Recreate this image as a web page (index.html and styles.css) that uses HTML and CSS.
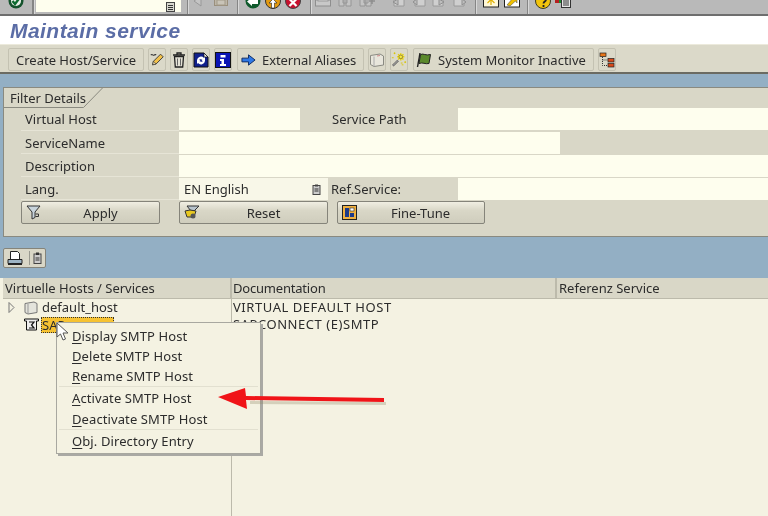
FILE: index.html
```html
<!DOCTYPE html>
<html lang="en">
<head>
<meta charset="utf-8">
<title>Maintain service</title>
<link rel="stylesheet" href="styles.css">
</head>
<body>
<div class="page">
  <header class="systembar">
    <span class="slot s-check"><svg width="16" height="16" viewBox="0 0 16 16"><circle cx="8" cy="8" r="7.5" fill="#14532d"/><circle cx="8" cy="8" r="5" fill="#e8efe8"/><path d="M4.500 8l2.500 3 4.500-6" fill="none" stroke="#0c6b2f" stroke-width="2.400"/></svg></span>
    <span class="sys-sep sep-a"></span>
    <span class="command"><svg class="doc" width="9" height="10" viewBox="0 0 9 10"><rect x=".5" y=".5" width="8" height="9" fill="#d8d8d0" stroke="#444"/><path d="M2 3.500h5M2 5.500h5M2 7.500h5" stroke="#333"/></svg></span>
    <span class="sys-sep sep-b"></span>
    <span class="slot s-nav"><svg width="12" height="16" viewBox="0 0 12 16"><path d="M10 3v10L3 8z" fill="#c4c4c4" stroke="#999"/></svg></span>
    <span class="slot s-save"><svg width="16" height="16" viewBox="0 0 16 16"><rect x="1.500" y="1.500" width="13" height="13" fill="#bdb6a8" stroke="#9a8f7c"/><rect x="4" y="9" width="8" height="5" fill="#c9c4b8" stroke="#a29a88"/></svg></span>
    <span class="sys-sep sep-c"></span>
    <span class="slot s-green"><svg width="18" height="16" viewBox="0 0 18 16"><circle cx="9" cy="8" r="7.500" fill="#0f5a2c"/><path d="M3 8.500l5-4v2.500h6v4H8v2z" fill="#fff"/></svg></span>
    <span class="slot s-round"><svg width="18" height="16" viewBox="0 0 18 16"><circle cx="9" cy="8" r="7.500" fill="#e39a10" stroke="#333"/><path d="M9 6l4 4h-2.500v5h-3v-5H5z" fill="#fff" stroke="#222" stroke-width=".6"/></svg></span>
    <span class="slot s-round"><svg width="18" height="16" viewBox="0 0 18 16"><circle cx="9" cy="8" r="7.500" fill="#c8102e" stroke="#444"/><path d="M5.500 6l7 7M12.500 6l-7 7" stroke="#fff" stroke-width="2.200"/></svg></span>
    <span class="sys-sep sep-d"></span>
    <span class="slot s-grey"><svg width="18" height="16" viewBox="0 0 18 16"><rect x="1.500" y="9" width="15" height="6" fill="#c8c8c8" stroke="#8e8e8e"/><rect x="4" y="2" width="10" height="8" fill="#d6d6d6" stroke="#9a9a9a"/></svg></span>
    <span class="slot s-grey"><svg width="18" height="16" viewBox="0 0 18 16"><path d="M3 3h5v12H3zM10 3h5v12h-5zM7 6h4v6H7z" fill="#c4c4c4" stroke="#969696"/></svg></span>
    <span class="slot s-grey"><svg width="18" height="16" viewBox="0 0 18 16"><path d="M2 3h5v12H2zM8 3h5v12H8zM6 6h4v6H6z" fill="#c4c4c4" stroke="#969696"/><path d="M14 7v6M11 10h6" stroke="#8e8e8e" stroke-width="1.500"/></svg></span>
    <span class="slot s-page s-first"><svg width="18" height="16" viewBox="0 0 18 16"><path d="M5 2h10v13H5z" fill="#cfcfcf" stroke="#9a9a9a"/><path d="M9 8l-5 3 5 3z" fill="#bdbdbd" stroke="#8f8f8f"/></svg></span>
    <span class="slot s-page"><svg width="18" height="16" viewBox="0 0 18 16"><path d="M5 2h10v13H5z" fill="#cfcfcf" stroke="#9a9a9a"/><path d="M7 8l-4 3 4 3z" fill="#bdbdbd" stroke="#8f8f8f"/></svg></span>
    <span class="slot s-page"><svg width="18" height="16" viewBox="0 0 18 16"><path d="M3 2h10v13H3z" fill="#cfcfcf" stroke="#9a9a9a"/><path d="M9 8l5 3-5 3z" fill="#bdbdbd" stroke="#8f8f8f"/></svg></span>
    <span class="slot s-page"><svg width="18" height="16" viewBox="0 0 18 16"><path d="M3 2h10v13H3z" fill="#cfcfcf" stroke="#9a9a9a"/><path d="M11 8l4 3-4 3z" fill="#bdbdbd" stroke="#8f8f8f"/></svg></span>
    <span class="sys-sep sep-f"></span>
    <span class="slot s-win"><svg width="16" height="16" viewBox="0 0 16 16"><rect x=".5" y="-1" width="15" height="16" fill="#fff8d8" stroke="#222"/><path d="M8 2v11M3 7.500h10M4.500 4l7 7M11.500 4l-7 7" stroke="#e0b000" stroke-width="1.200"/></svg></span>
    <span class="slot s-win2"><svg width="16" height="16" viewBox="0 0 16 16"><rect x=".5" y="-1" width="15" height="16" fill="#fff" stroke="#222"/><path d="M3 13l6-7-2-1h6v6l-1.500-2L6 14z" fill="#f0c000" stroke="#444" stroke-width=".5"/></svg></span>
    <span class="sys-sep sep-g"></span>
    <span class="slot s-help"><svg width="18" height="16" viewBox="0 0 18 16"><circle cx="9" cy="8" r="7.500" fill="#f2c40c" stroke="#3a3a22"/><path d="M6.500 6.500c0-3.500 5.500-3.500 5.500 0 0 2-2.500 2-2.500 4M9.500 12v2" fill="none" stroke="#222" stroke-width="1.800"/></svg></span>
    <span class="slot s-layout"><svg width="16" height="16" viewBox="0 0 16 16"><rect x="0" y="2" width="4" height="9" fill="#b52020"/><rect x="4" y="2" width="4" height="9" fill="#1c8a30"/><rect x="8" y="2" width="4" height="4" fill="#2244aa"/><rect x="6.500" y="6.500" width="9" height="9" fill="#e8e8e8" stroke="#333"/><path d="M8 9h6M8 11h6M8 13h6" stroke="#333"/></svg></span>
  </header>

  <div class="titlebar"><h1>Maintain service</h1></div>

  <div class="apptoolbar">
    <button class="tbtn tbtn-text">Create Host/Service</button>
    <button class="tbtn tbtn-icon"><svg width="17" height="17" viewBox="0 0 18 18"><path d="M2 4c2-2 2 1 4 0s1-1 2 0" fill="none" stroke="#333" stroke-width="1.200"/><path d="M4 15l1-4L13 3l3 3-8 8z" fill="#f2c14a" stroke="#333"/><path d="M4 15l1-4 3 3z" fill="#e8d8b0" stroke="#333" stroke-width=".7"/></svg></button>
    <button class="tbtn tbtn-icon"><svg width="14" height="16" viewBox="0 0 14 16"><path d="M1 3h12M5 3V1h4v2" fill="none" stroke="#222" stroke-width="1.300"/><path d="M2.500 4.500h9l-.8 10.500H3.300z" fill="#e4e2d6" stroke="#222" stroke-width="1.300"/><path d="M5.500 6.500v7M8.500 6.500v7" stroke="#666"/></svg></button>
    <button class="tbtn tbtn-icon"><svg width="16" height="16" viewBox="0 0 16 16"><path d="M1 1h10l4 4v10H1z" fill="#10208c" stroke="#111"/><path d="M11 1v4h4z" fill="#eee" stroke="#111" stroke-width=".7"/><path d="M4 8a4 4 0 0 1 7-2l1-1v4H8.500l1-1a2.500 2.500 0 0 0-4 .5zM12 9a4 4 0 0 1-7 2l-1 1V8h3.500l-1 1a2.500 2.500 0 0 0 4-.5z" fill="#fff"/></svg></button>
    <button class="tbtn tbtn-icon"><svg width="16" height="16" viewBox="0 0 16 16"><rect x=".5" y=".5" width="15" height="15" fill="#0a14b4" stroke="#111"/><path d="M5.500 3h5v2.500h-5zM5 7h4v5h2v2H5v-2h1.500V9H5z" fill="#fff"/></svg></button>
    <button class="tbtn tbtn-aliases"><svg width="15" height="14" viewBox="0 0 16 14"><path d="M1 5h7V1.500L15 7l-7 5.500V9H1z" fill="#2e78e6" stroke="#0f2a60"/></svg><span>External Aliases</span></button>
    <button class="tbtn tbtn-icon"><svg width="16" height="16" viewBox="0 0 16 16"><path d="M1.500 3.500L11 2l3.500 2v9L5 14.500l-3.500-2z" fill="#e8e6dc" stroke="#8a8a82"/><path d="M5 4.500v10" stroke="#aaa"/><path d="M8 4l3-.5" stroke="#c88"/></svg></button>
    <button class="tbtn tbtn-icon"><svg width="17" height="17" viewBox="0 0 18 18"><path d="M2 16L8 10" stroke="#555" stroke-width="2.400"/><path d="M2 16L8 10" stroke="#eee" stroke-width=".8"/><path d="M11 2v8M7 6h8M8 3l6 6M14 3l-6 6" stroke="#e8d000" stroke-width="1.600"/><circle cx="11" cy="6" r="2" fill="#f8e840" stroke="#555" stroke-width=".6"/><path d="M3 2h2M4 1v2M15 12h2M16 11v2M11 13h2M12 15h2M1 7h2" stroke="#d8c400"/></svg></button>
    <button class="tbtn tbtn-monitor"><svg width="16" height="16" viewBox="0 0 16 16"><path d="M4 1L1.500 15" stroke="#222" stroke-width="1.400"/><path d="M4.500 2.500c3-1.500 5 1.500 10 0l-1.500 9c-4 1-6-1.500-10 0z" fill="#5b8a2c" stroke="#222"/></svg><span>System Monitor Inactive</span></button>
    <button class="tbtn tbtn-icon"><svg width="16" height="16" viewBox="0 0 16 16"><rect x="1" y="1" width="6" height="3.500" fill="#e8761a" stroke="#222" stroke-width=".7"/><rect x="9" y="6.500" width="6" height="3.500" fill="#d84a1a" stroke="#222" stroke-width=".7"/><rect x="9" y="11.500" width="6" height="3.500" fill="#d84a1a" stroke="#222" stroke-width=".7"/><path d="M3.500 5v8.500H9M3.500 8H9" fill="none" stroke="#333" stroke-dasharray="1 1"/></svg></button>
  </div>

  <main class="workarea">
    <section class="filter">
      <div class="tab"><span>Filter Details</span><svg class="tabline" width="103" height="20" viewBox="0 0 103 20"><path d="M0 19.500h79.500L98.500 0" fill="none" stroke="#8a8a80"/></svg></div>
      <div class="fgrid">
        <label class="lbl">Virtual Host</label>
        <div class="inp f-host"></div>
        <label class="lbl2 l-path">Service Path</label>
        <div class="inp f-path f-first"></div>

        <label class="lbl">ServiceName</label>
        <div class="inp f-name"></div>
        <div class="blank"></div>

        <label class="lbl">Description</label>
        <div class="inp f-wide"></div>

        <label class="lbl">Lang.</label>
        <div class="inp f-lang"><span>EN English</span><svg width="9" height="11" viewBox="0 0 9 11"><rect x="1" y="1.500" width="7" height="9" fill="#ccc" stroke="#444"/><rect x="3" y=".5" width="3" height="2" fill="#444"/><path d="M2.500 5h4M2.500 7h4" stroke="#333"/></svg></div>
        <label class="lbl2">Ref.Service:</label>
        <div class="inp f-path"></div>
      </div>
      <div class="actions">
        <button class="pbtn b-apply"><svg width="16" height="15" viewBox="0 0 16 15"><path d="M1 1h13L9 7v5.500L6 14V7z" fill="#c8d4dc" stroke="#333"/><path d="M9.500 9h3v2.500h-3" fill="none" stroke="#333"/></svg><span>Apply</span></button>
        <button class="pbtn b-reset"><svg width="16" height="15" viewBox="0 0 16 15"><path d="M3 1h12L10 6H7z" fill="#b8c4cc" stroke="#333"/><path d="M1 6l5-1 6 1-2 6H3z" fill="#e8c820" stroke="#333"/><circle cx="9" cy="11" r="2.500" fill="#555"/></svg><span>Reset</span></button>
        <button class="pbtn b-tune"><svg width="15" height="15" viewBox="0 0 15 15"><rect x=".5" y=".5" width="14" height="14" fill="#f0b040" stroke="#222"/><rect x="3" y="3" width="4" height="9" fill="#1c3a8a"/><rect x="8" y="3" width="4" height="3" fill="#fff" stroke="#222" stroke-width=".6"/><rect x="8" y="8" width="4" height="4" fill="#1c3a8a"/></svg><span>Fine-Tune</span></button>
      </div>
    </section>

    <div class="printbar">
      <div class="printgroup">
        <svg width="16" height="16" viewBox="0 0 16 16"><path d="M3.500 1.500h7l2 2v6h-9z" fill="#fff" stroke="#222"/><path d="M1 9.500h14v4H1z" fill="#9db4c4" stroke="#222"/><path d="M1 14.500h14" stroke="#222"/></svg>
        <i class="pg-sep"></i>
        <svg width="9" height="12" viewBox="0 0 9 12"><rect x="1" y="2" width="7" height="9.500" fill="#ccc" stroke="#444"/><rect x="3" y=".5" width="3" height="2.500" fill="#333"/><path d="M2.500 6h4M2.500 8h4" stroke="#333"/></svg>
      </div>
    </div>

    <section class="tree">
      <div class="thead">
        <div class="col c1">Virtuelle Hosts / Services</div>
        <div class="col c2">Documentation</div>
        <div class="col c3">Referenz Service</div>
      </div>
      <div class="tbody">
        <div class="tcol tc1">
          <div class="node">
            <svg class="twist" width="7" height="11" viewBox="0 0 7 11"><path d="M1 .5l5 5-5 5z" fill="#f4f2e2" stroke="#777"/></svg>
            <svg class="nodeicon" width="14" height="14" viewBox="0 0 14 14"><path d="M1 2.500L10 1l3 1.500v9L4 13l-3-1.500z" fill="#e4e4dc" stroke="#777"/><path d="M4 3v10" stroke="#999"/></svg>
            <span>default_host</span>
          </div>
          <div class="node node-sel">
            <svg class="nodeicon2" width="15" height="14" viewBox="0 0 15 14"><path d="M.5 1h14v2h-2v9h-10V3h-2z" fill="#eee" stroke="#111"/><path d="M5 4h5L7.500 7 10 10H5" fill="none" stroke="#111" stroke-width="1.200"/></svg>
            <span class="sel">SAP</span>
          </div>
        </div>
        <div class="tcol tc2">
          <div class="docline">VIRTUAL DEFAULT HOST</div>
          <div class="docline">SAPCONNECT (E)SMTP</div>
        </div>
      </div>
    </section>
  </main>

  <nav class="ctxmenu">
    <div class="group">
      <div class="mi"><u>D</u>isplay SMTP Host</div>
      <div class="mi"><u>D</u>elete SMTP Host</div>
      <div class="mi"><u>R</u>ename SMTP Host</div>
    </div>
    <div class="group g2">
      <div class="mi"><u>A</u>ctivate SMTP Host</div>
      <div class="mi"><u>D</u>eactivate SMTP Host</div>
    </div>
    <div class="group">
      <div class="mi"><u>O</u>bj. Directory Entry</div>
    </div>
  </nav>

  <svg class="cursor" width="13" height="19" viewBox="0 0 13 19"><path d="M1 1v14l3.500-3 2.500 6 2.500-1-2.500-6h5z" fill="#fff" stroke="#555"/></svg>

  <svg class="arrow" width="176" height="26" viewBox="0 0 176 26"><path d="M33 16l136 1v3L33 19z" fill="#8a8060" opacity=".3"/><path d="M1 12L28 3l1 8 138 2v4L29 15l1 9z" fill="#f01418"/></svg>
</div>
</body>
</html>
```

FILE: styles.css
```css
* { box-sizing: border-box; }
html, body { margin: 0; padding: 0; }
body {
  width: 768px;
  height: 516px;
  overflow: hidden;
  background: #f4f2e2;
  font-family: "Noto Sans", sans-serif;
  font-size: 13px;
  color: #2c2c2c;
}
.page { position: relative; width: 768px; height: 516px; overflow: hidden; filter: blur(.35px); }

/* system toolbar */
.systembar {
  height: 16px;
  background: #b9b9b9;
  border-bottom: 2px solid #6e6e6e;
  display: flex;
  align-items: flex-end;
  overflow: hidden;
}
.slot { display: flex; justify-content: center; align-items: flex-end; height: 14px; flex: none; padding-bottom: 6px; }
.slot svg { flex: none; }
.s-check { width: 16px; margin-left: 8px; margin-right: 8px; padding-bottom: 5px; }
.sys-sep { width: 1px; height: 14px; flex: none; background: #858585; box-shadow: 1px 0 0 #d8d8d8; }
.sep-a { width: 2px; margin-right: 2px; }
.command {
  width: 145px; height: 12px; background: #fefeee; flex: none;
  align-self: flex-start; display: flex; justify-content: flex-end; padding-right: 6px; align-items: flex-end;
}
.sep-b { margin-left: 6px; }
.s-nav { width: 18px; padding-bottom: 5px; }
.s-save { width: 20px; margin-left: 4.500px; padding-bottom: 7px; }
.sep-c { margin-left: 6.500px; }
.s-green { width: 20px; margin-left: 5px; padding-bottom: 5px; }
.s-round { width: 20px; padding-bottom: 5px; }
.sep-d { margin-left: 7px; }
.s-grey { width: 22px; padding-bottom: 7px; }
.sep-d + .s-grey { margin-left: 1px; }
.s-page { width: 20.500px; padding-bottom: 7px; }
.s-first { margin-left: 10px; }
.sep-f { margin-left: 5px; }
.s-win { width: 20px; margin-left: 5px; padding-bottom: 6px; }
.s-win2 { width: 20px; margin-left: 1px; padding-bottom: 6px; }
.sep-g { margin-left: 5px; }
.s-help { width: 20px; margin-left: 5px; padding-bottom: 5px; }
.s-layout { width: 20px; padding-bottom: 6px; }

/* title */
.titlebar { height: 28px; background: #fff; padding: 2px 0 0 10px; }
.titlebar h1 {
  margin: 0;
  font: italic bold 21px/26px "Liberation Sans", sans-serif;
  letter-spacing: .45px;
  color: #5b6da6;
}

/* application toolbar */
.apptoolbar {
  height: 30px;
  background: #dbd9c9;
  border-bottom: 2px solid #6b6b62;
  border-top: 1px solid #eceadc;
  display: flex;
  align-items: flex-start;
  padding: 3px 0 0 8px;
  gap: 4px;
}
.tbtn {
  height: 23px;
  padding: 0;
  background: #dbd9c9;
  border: 1px solid #c4c2b2;
  border-radius: 2px;
  color: inherit;
  font: inherit;
  display: flex;
  align-items: center;
  justify-content: center;
  flex: none;
  white-space: nowrap;
}
.tbtn-text { width: 136px; }
.tbtn-icon { width: 18px; }
.tbtn-aliases { width: 127px; margin-left: 1px; gap: 6px; justify-content: flex-start; padding-left: 3px; letter-spacing: -.1px; }
.tbtn-monitor { width: 181px; margin-left: 1px; gap: 6px; justify-content: flex-start; padding-left: 2px; }

/* work area */
.workarea { height: 442px; background: #93afc4; padding-top: 13px; display: flex; flex-direction: column; }

.filter {
  height: 150px;
  margin-left: 3px;
  background: #d9d7c7;
  border-left: 1px solid #8a8a80;
  border-top: 1px solid #8a8a80;
  border-bottom: 1px solid #8a8a80;
  flex: none;
}
.tab { height: 20px; position: relative; }
.tab span { display: block; padding: 2px 0 0 6px; line-height: 17px; white-space: nowrap; }
.tabline { position: absolute; left: 0; top: 0; }
.fgrid {
  display: grid;
  grid-template-columns: 158px 121px 28px 3px 127px 102px 1fr;
  grid-template-rows: 23px 22px 22px 22px;
  row-gap: 1px;
  padding-left: 17px;
}
.lbl {
  grid-column: 1;
  padding-left: 4px;
  line-height: 22px;
  border-bottom: 1px solid #e6e4d6;
  white-space: nowrap;
}
.lbl2 { line-height: 22px; white-space: nowrap; grid-column: 5; }
.l-path { padding-left: 1px; }
.inp { background: #fefeee; }
.f-host { grid-column: 2; margin-bottom: 1px; }
.f-path { grid-column: 6 / 8; }
.f-first { margin-bottom: 1px; }
.f-name { grid-column: 2 / 7; }
.blank { grid-column: 7; }
.f-wide { grid-column: 2 / 8; }
.f-lang {
  grid-column: 2 / 4;
  background: #f8f7e8;
  display: flex;
  justify-content: space-between;
  align-items: center;
  padding: 0 7px 0 5px;
}
.actions { display: flex; padding: 1px 0 0 17px; }
.pbtn {
  height: 23px;
  padding: 0 0 0 4px;
  background: linear-gradient(#f0eee2, #d9d7c7 40%, #cfcdbd);
  border: 1px solid #85847a;
  border-radius: 2px;
  color: inherit;
  font: inherit;
  display: flex;
  align-items: center;
  flex: none;
}
.pbtn svg { flex: none; }
.pbtn span { flex: 1; text-align: center; }
.b-apply { width: 139px; margin-right: 19px; }
.b-reset { width: 149px; margin-right: 9px; }
.b-tune { width: 148px; }

.printbar { height: 41px; padding: 11px 0 0 3px; flex: none; }
.printgroup {
  width: 43px;
  height: 20px;
  background: #d9d7c7;
  border: 1px solid #85847a;
  border-radius: 2px;
  display: flex;
  align-items: center;
  gap: 3px;
  padding-left: 3px;
}
.pg-sep { width: 1px; height: 14px; background: #9a9a90; margin-left: 3px; }

.tree { flex: 1; background: #f4f2e2; display: flex; flex-direction: column; }
.thead {
  height: 21px;
  margin-left: 3px;
  background: #d9d7c7;
  border-bottom: 1px solid #bcbaab;
  display: flex;
  flex: none;
}
.col { line-height: 20px; padding-left: 2px; border-right: 2px solid #bcbaab; white-space: nowrap; }
.c1 { width: 229px; }
.c2 { width: 325px; padding-left: 1px; letter-spacing: -.2px; }
.c3 { flex: 1; border-right: 0; }
.tbody { flex: 1; display: flex; }
.tc1 { width: 232px; border-right: 1px solid #bcbaab; }
.tc2 { padding-left: 1px; letter-spacing: .55px; }
.node { height: 17px; display: flex; align-items: center; padding-left: 8px; }
.twist { margin-right: 9px; }
.nodeicon { margin-right: 4px; }
.nodeicon2 { margin-right: 2px; }
.node span { line-height: 17px; }
.node-sel { padding-left: 24px; }
.sel {
  width: 73px;
  background: #f6c232;
  border: 1px dotted #333;
  height: 16px;
  line-height: 14px !important;
  display: block;
}
.docline { height: 17px; line-height: 17px; white-space: nowrap; }

/* overlays */
.ctxmenu {
  position: absolute;
  left: 56px;
  top: 322px;
  width: 205px;
  height: 132px;
  background: #f4f2e2;
  border: 1px solid #a8a8a0;
  box-shadow: 2px 2px 0 #a9a9a4;
  padding: 3px 2px 0;
}
.group { border-bottom: 1px solid #e2e0d0; padding-top: 1px; }
.group:first-child { padding-top: 0; }
.group:last-child { border-bottom: 0; }
.mi { height: 20px; line-height: 20px; padding-left: 13px; white-space: nowrap; letter-spacing: .1px; }
.g2 .mi { height: 20.500px; }
.mi u { text-underline-offset: 2px; }
.cursor { position: absolute; left: 56px; top: 322px; }
.arrow { position: absolute; left: 217px; top: 385px; overflow: visible; }
```
